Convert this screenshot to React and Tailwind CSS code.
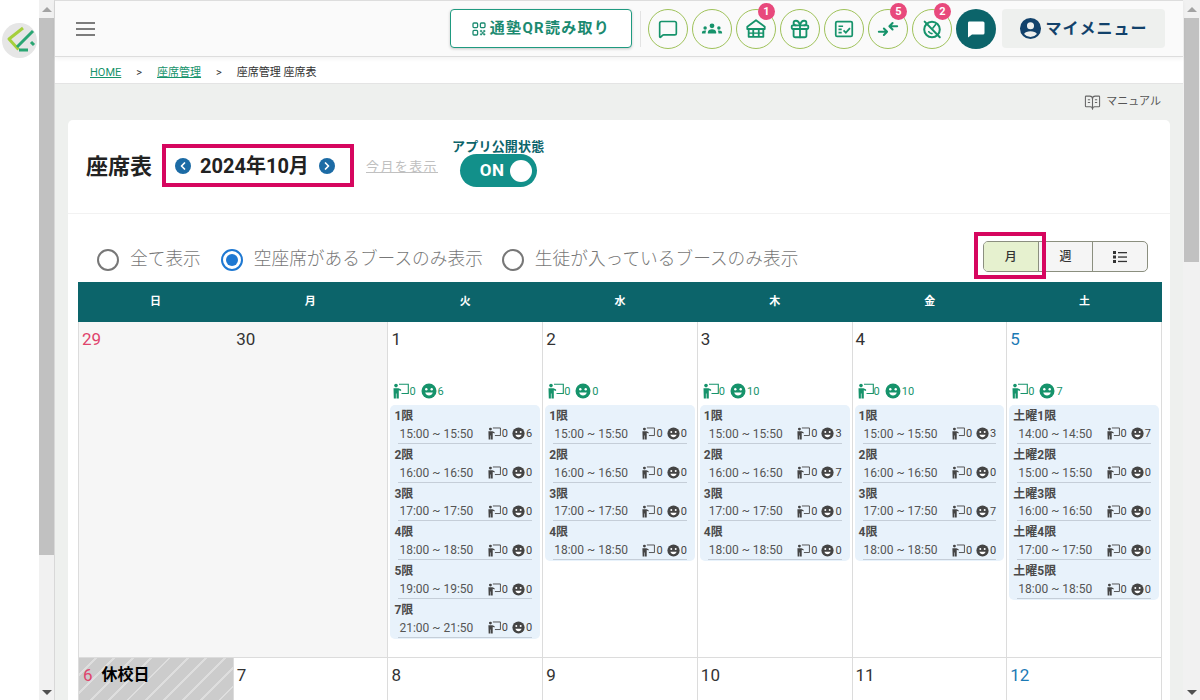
import React from "react";
import { MessageSquare, Gift, ChevronLeft, ChevronRight, BookOpenText } from "lucide-react";

const FONT = "font-['Roboto','Noto_Sans_CJK_JP',sans-serif]";

function Teacher({ className }) {
  return (
    <svg viewBox="0 0 16 16" className={className} fill="none">
      <circle cx="3" cy="2.600" r="1.800" fill="currentColor" />
      <path d="M.5 5.200h5l2.600 1.300v1.400L5.800 7.200V15.500H3.500v-5h-.6v5H.8z" fill="currentColor" />
      <path d="M6 1.200h9.300v9.300H8.500" stroke="currentColor" strokeWidth="1.100" />
    </svg>
  );
}

function Smile({ className }) {
  return (
    <svg viewBox="0 0 16 16" className={className}>
      <circle cx="8" cy="8" r="7.500" fill="currentColor" />
      <circle cx="5.300" cy="6.200" r="1.200" fill="#fff" />
      <circle cx="10.700" cy="6.200" r="1.200" fill="#fff" />
      <path d="M4.200 9.500h7.600c-.5 2-2 3-3.800 3s-3.300-1-3.800-3z" fill="#fff" />
    </svg>
  );
}

function QrIcon({ className }) {
  return (
    <svg viewBox="0 0 14 14" className={className} fill="none" stroke="currentColor" strokeWidth="1.300">
      <rect x="1" y="1" width="4.600" height="4.600" rx="1" />
      <rect x="8.400" y="1" width="4.600" height="4.600" rx="1" />
      <rect x="1" y="8.400" width="4.600" height="4.600" rx="1" />
      <path d="M8.400 8.400h1.400v1.400H8.400zM11.600 8.400H13v1.400h-1.400zM10 10.200h1.400v1.400H10zM8.400 11.800h1.400V13H8.400zM11.600 11.800H13V13h-1.400z" strokeWidth="0.600" fill="currentColor" />
    </svg>
  );
}

function PeopleIcon({ className }) {
  return (
    <svg viewBox="0 0 24 24" className={className} fill="currentColor">
      <circle cx="12" cy="8.500" r="2.600" />
      <path d="M7.500 17v-1.500c0-2 2-3.200 4.500-3.200s4.500 1.200 4.500 3.200V17z" />
      <circle cx="4.500" cy="11" r="1.900" />
      <path d="M1 17v-1c0-1.500 1.300-2.400 3.300-2.400.5 0 1 .1 1.400.2-.5.6-.7 1.300-.7 2V17z" />
      <circle cx="19.500" cy="11" r="1.900" />
      <path d="M23 17v-1c0-1.500-1.300-2.400-3.300-2.400-.5 0-1 .1-1.400.2.5.6.7 1.300.7 2V17z" />
    </svg>
  );
}

function SchoolIcon({ className }) {
  return (
    <svg viewBox="0 0 24 24" className={className} fill="none" stroke="currentColor" strokeWidth="2" strokeLinejoin="round">
      <path d="M12 2.500 2.500 9.500v2.500h19V9.500z" />
      <path d="M4 12v8.500h16V12M9 12v8.500M15 12v8.500" />
      <path d="M4 16.500h16" strokeWidth="1.500" />
    </svg>
  );
}

function ChecklistIcon({ className }) {
  return (
    <svg viewBox="0 0 24 24" className={className} fill="none" stroke="currentColor" strokeWidth="1.900">
      <rect x="3" y="4" width="18" height="16" rx="1.500" />
      <path d="M6 9h5M6 12.500h3.500M6 16h3.500" />
      <path d="m11.500 13.500 2.500 2.500 4.500-5" />
    </svg>
  );
}

function ArrowsIcon({ className }) {
  return (
    <svg viewBox="0 0 24 24" className={className} fill="none" stroke="currentColor" strokeWidth="2.200" strokeLinecap="round" strokeLinejoin="round">
      <path d="M2 15h9M7.500 11.500 11 15l-3.500 3.500" />
      <path d="M22 9h-8M17 5.500 13.500 9l3.500 3.500" />
    </svg>
  );
}

function NoClockIcon({ className }) {
  return (
    <svg viewBox="0 0 24 24" className={className} fill="none" stroke="currentColor" strokeWidth="2.200" strokeLinecap="round">
      <circle cx="12" cy="12.500" r="8.500" />
      <path d="M13 11l3-4M8.500 15c1 1.300 2.300 2 3.500 2" strokeWidth="1.800" />
      <path d="m4 4 16.500 17" />
    </svg>
  );
}

function ListIcon({ className }) {
  return (
    <svg viewBox="0 0 16 14" className={className} fill="currentColor">
      <rect x="1" y="1" width="3" height="3" />
      <rect x="1" y="5.500" width="3" height="3" />
      <rect x="1" y="10" width="3" height="3" />
      <rect x="6" y="2" width="9" height="1.300" />
      <rect x="6" y="6.400" width="9" height="1.300" />
      <rect x="6" y="10.800" width="9" height="1.300" />
    </svg>
  );
}

function CircleBtn({ children, badge }) {
  return (
    <div className="relative flex h-10 w-10 items-center justify-center rounded-full border border-[#9fc25a] bg-[#fafafa] text-[#16936b]">
      {children}
      {badge && (
        <span className="absolute right-0 top-[-7px] flex h-[17px] w-[17px] items-center justify-center rounded-full bg-[#e8497c] text-[11px] font-bold leading-none text-white">
          {badge}
        </span>
      )}
    </div>
  );
}

function Scrollbar({ thumb, className }) {
  return (
    <div className={`flex h-full flex-col items-center bg-[#f1f1f1] ${className}`}>
      <div className="mt-[7px] h-0 w-0 border-x-[5px] border-b-[5px] border-x-transparent border-b-[#a3a3a3]" />
      <div className={`mt-[6px] w-full bg-[#c1c1c1] ${thumb}`} />
      <div className="flex-1" />
      <div className="mb-[5px] h-0 w-0 border-x-[5px] border-t-[5px] border-x-transparent border-t-[#505050]" />
    </div>
  );
}

const times = (start, n) =>
  Array.from({ length: n }, (_, i) => {
    const h = start + i;
    return `${h}:00 ~ ${h}:50`;
  });

const tue = [
  ["1限", "15:00 ~ 15:50", 6],
  ["2限", "16:00 ~ 16:50", 0],
  ["3限", "17:00 ~ 17:50", 0],
  ["4限", "18:00 ~ 18:50", 0],
  ["5限", "19:00 ~ 19:50", 0],
  ["7限", "21:00 ~ 21:50", 0],
];
const four = (vals) => times(15, 4).map((t, i) => [`${i + 1}限`, t, vals[i]]);
const sat = times(14, 5).map((t, i) => [`土曜${i + 1}限`, t, i === 0 ? 7 : 0]);

const week1 = [
  { n: 1, total: 6, rows: tue },
  { n: 2, total: 0, rows: four([0, 0, 0, 0]) },
  { n: 3, total: 10, rows: four([3, 7, 0, 0]) },
  { n: 4, total: 10, rows: four([3, 0, 7, 0]) },
  { n: 5, total: 7, rows: sat, color: "text-[#1c7ab5]" },
];

function DayCell({ d }) {
  return (
    <div className="h-[336px] border-b border-r border-[#dcdcdc] px-[2px]">
      <div className={`pl-[1px] pt-[6px] text-[17px] leading-[22px] ${d.color || "text-[#333]"}`}>{d.n}</div>
      <div className="mt-[29px] flex h-[26px] items-center gap-[5px] pb-[2px] pl-[3px] text-[#16936b]">
        <div className="flex items-center">
          <Teacher className="h-4 w-4" />
          <span className="text-[11px] leading-none">0</span>
        </div>
        <div className="flex items-center gap-[1px]">
          <Smile className="h-4 w-4" />
          <span className="text-[11px] leading-none">{d.total}</span>
        </div>
      </div>
      <div className="rounded-[5px] bg-[#e8f2fb] pb-[1px]">
        {d.rows.map((r, i) => (
          <div key={i} className="h-[38.8px] pl-[4px] pr-[8px]">
            <div className="pt-[2px] text-[12px] font-bold leading-[18px] text-[#4a4a4a]">{r[0]}</div>
            <div className="ml-[4px] flex h-[18.8px] items-center border-b border-[#c5ced8] text-[12px] leading-none text-[#555]">
              <span className="ml-[1px]">{r[1]}</span>
              <span className="ml-auto flex items-center text-[#444]">
                <Teacher className="h-[13px] w-[13px]" />
                <span className="ml-[1px] text-[11px]">0</span>
                <Smile className="ml-[4px] h-[13px] w-[13px]" />
                <span className="ml-[1px] text-[11px]">{r[2]}</span>
              </span>
            </div>
          </div>
        ))}
      </div>
    </div>
  );
}

export default function App() {
  return (
    <div className={`flex h-[700px] w-[1200px] overflow-hidden bg-white ${FONT}`}>
      {/* left rail */}
      <div className="flex w-[39px] shrink-0 justify-start pl-[2px] pt-[23px]">
        <div className="h-[35px] w-[35px] rounded-full bg-[#e6e6e6]">
          <svg viewBox="0 0 35 35" className="h-[35px] w-[35px]" fill="none" strokeWidth="3" strokeLinejoin="round">
            <path d="M21 5 7 16l9.500 10.500" stroke="#a5cf3c" />
            <path d="M15 24 31 8" stroke="#2aa673" />
            <path d="M17 27h9M29 19l3 3" stroke="#2aa673" />
          </svg>
        </div>
      </div>
      <Scrollbar className="w-[16px] shrink-0 border-r border-[#d8d8d8]" thumb="h-[537px]" />
      {/* main */}
      <div className="flex min-w-0 flex-1 flex-col bg-[#eef0ee]">
        <header className="z-10 flex h-[57px] shrink-0 items-center border-b border-t border-[#dddddd] bg-[#fafafa] pr-[18px] shadow-[0_2px_4px_rgba(0,0,0,0.05)]">
          <div className="ml-[21px] flex w-[19px] flex-col gap-[4px]">
            <span className="h-[2px] bg-[#7c7c7c]" />
            <span className="h-[2px] bg-[#7c7c7c]" />
            <span className="h-[2px] bg-[#7c7c7c]" />
          </div>
          <button className="ml-auto flex h-[39px] w-[182px] items-center justify-center gap-[4px] rounded-[4px] border-[1.5px] border-[#1f9a80] bg-white text-[15px] font-bold tracking-[1.3px] text-[#1b8a70] shadow-[0_1px_3px_rgba(0,0,0,0.2)]">
            <QrIcon className="h-[14px] w-[14px]" />
            通塾QR読み取り
          </button>
          <div className="ml-[8px] mr-[7px] h-[36px] w-px bg-[#e3e3e3]" />
          <div className="flex items-center gap-[4px]">
            <CircleBtn><MessageSquare className="h-[20px] w-[20px]" strokeWidth={2} /></CircleBtn>
            <CircleBtn><PeopleIcon className="h-[22px] w-[22px]" /></CircleBtn>
            <CircleBtn badge="1"><SchoolIcon className="h-[22px] w-[22px]" /></CircleBtn>
            <CircleBtn><Gift className="h-[22px] w-[22px]" strokeWidth={2} /></CircleBtn>
            <CircleBtn><ChecklistIcon className="h-[22px] w-[22px]" /></CircleBtn>
            <CircleBtn badge="5"><ArrowsIcon className="h-[22px] w-[22px]" /></CircleBtn>
            <CircleBtn badge="2"><NoClockIcon className="h-[22px] w-[22px]" /></CircleBtn>
            <div className="flex h-10 w-10 items-center justify-center rounded-full bg-[#0c646a]">
              <svg viewBox="0 0 20 20" className="h-[20px] w-[20px]"><path d="M3 2.500h14a1.500 1.500 0 0 1 1.500 1.500v10a1.500 1.500 0 0 1-1.500 1.500H6L2 18.500V4A1.500 1.500 0 0 1 3 2.500z" fill="#fff" /></svg>
            </div>
          </div>
          <div className="ml-[6px] flex h-[39px] w-[163px] items-center justify-center gap-[3px] rounded-[4px] bg-[#eef0ee] text-[16px] font-bold tracking-[1px] text-[#12426b]">
            <svg viewBox="0 0 24 24" className="h-[23px] w-[23px]" fill="#12426b">
              <path d="M12 1a11 11 0 1 0 0 22 11 11 0 0 0 0-22zm0 4.500a3.700 3.700 0 1 1 0 7.400 3.700 3.700 0 0 1 0-7.400zm0 15.300a8.800 8.800 0 0 1-6.700-3.100c.8-1.700 3.700-2.800 6.700-2.800s5.900 1.100 6.700 2.800a8.800 8.800 0 0 1-6.700 3.100z" />
            </svg>
            マイメニュー
          </div>
        </header>

        <nav className="flex h-[27px] shrink-0 items-center border-b border-[#e4e4e4] bg-white pl-[35px] pt-[6px] text-[11px] text-[#333]">
          <span className="text-[#16936b] underline">HOME</span>
          <span className="ml-[15px]">&gt;</span>
          <span className="ml-[15px] text-[#16936b] underline">座席管理</span>
          <span className="ml-[15px]">&gt;</span>
          <span className="ml-[15px]">座席管理 座席表</span>
        </nav>

        <div className="flex h-[36px] shrink-0 items-center justify-end pr-[22px] pt-[1px] text-[11px] text-[#555]">
          <BookOpenText className="mr-[5px] h-[17px] w-[17px] text-[#666]" strokeWidth={1.500} />
          マニュアル
        </div>

        <section className="relative ml-[13px] mr-[13px] flex-1 rounded-t-[5px] bg-white">
          <div className="flex h-[94px] items-start border-b border-[#f2f2f2] pl-[18px]">
            <h1 className="mt-[32px] text-[22px] font-bold leading-[30px] text-[#222]">座席表</h1>
            <div className="ml-[10px] mt-[24px] flex h-[43px] w-[192px] shrink-0 items-center border-[4px] border-[#d6065f] pl-[9px]">
              <span className="flex h-4 w-4 items-center justify-center rounded-full bg-[#1c6ba5] text-white"><ChevronLeft className="h-3 w-3" strokeWidth={3.500} /></span>
              <span className="ml-[9px] text-[20px] font-bold leading-none text-[#222]">2024年10月</span>
              <span className="ml-[10px] flex h-4 w-4 items-center justify-center rounded-full bg-[#1c6ba5] text-white"><ChevronRight className="h-3 w-3" strokeWidth={3.500} /></span>
            </div>
            <span className="ml-[12px] mt-[37px] text-[13px] leading-[20px] tracking-[1.4px] text-[#c0c0c0] underline">今月を表示</span>
            <div className="relative ml-[14px] mt-[19px] flex flex-col items-center">
              <span className="text-[13px] font-bold leading-[15px] tracking-[0.2px] text-[#0c646a]">アプリ公開状態</span>
              <div className="flex h-[33px] w-[77px] items-center justify-between rounded-full bg-[#12908a] pl-[20px] pr-[5px] text-[17px] font-bold tracking-[0.5px] text-white">
                ON
                <span className="h-[22px] w-[22px] rounded-full bg-white" />
              </div>
            </div>
          </div>

          <div className="flex h-[68px] items-end pb-[11px] pl-[29px] text-[17.7px] font-light leading-[24px] text-[#777]">
            <span className="h-[22px] w-[22px] rounded-full border-2 border-[#777]" />
            <span className="ml-[11px]">全て表示</span>
            <span className="ml-[20px] flex h-[22px] w-[22px] items-center justify-center rounded-full border-2 border-[#1e78d2]">
              <span className="h-[12px] w-[12px] rounded-full bg-[#1e78d2]" />
            </span>
            <span className="ml-[11px]">空座席があるブースのみ表示</span>
            <span className="ml-[19px] h-[22px] w-[22px] rounded-full border-2 border-[#777]" />
            <span className="ml-[11px]">生徒が入っているブースのみ表示</span>
          </div>

          <div className="absolute left-[915px] top-[121px] flex h-[31px] w-[165px] overflow-hidden rounded-[5px] border border-[#8b8f7f] bg-[#f5f5f5] text-[12px] font-medium text-[#333]">
            <span className="flex flex-1 items-center justify-center border-r border-[#8b8f7f] bg-[#e6f1cf]">月</span>
            <span className="flex flex-1 items-center justify-center border-r border-[#8b8f7f]">週</span>
            <span className="flex flex-1 items-center justify-center"><ListIcon className="h-[14px] w-[16px]" /></span>
          </div>
          <div className="absolute left-[906px] top-[112px] h-[47px] w-[72px] border-[4px] border-[#d6065f]" />

          <div className="ml-[10px] mr-[8px]">
            <div className="grid h-[40px] grid-cols-7 bg-[#0c646a] text-[11px] font-bold text-white">
              {["日", "月", "火", "水", "木", "金", "土"].map((d) => (
                <div key={d} className="flex items-center justify-center">{d}</div>
              ))}
            </div>
            <div className="grid grid-cols-7 border-l border-[#dcdcdc]">
              <div className="col-span-2 grid h-[336px] grid-cols-2 border-b border-r border-[#dcdcdc] bg-[#f6f6f6] text-[17px] leading-[22px]">
                <div className="pl-[3px] pt-[6px] text-[#e0446c]">29</div>
                <div className="pl-[3px] pt-[6px] text-[#333]">30</div>
              </div>
              {week1.map((d) => <DayCell key={d.n} d={d} />)}

              <div className="flex h-[60px] items-start gap-[9px] border-r border-[#dcdcdc] bg-[repeating-linear-gradient(135deg,#cccccc_0px,#cccccc_11px,#dedede_11px,#dedede_13px)] pl-[4px] pt-[6px] text-[17px] leading-[22px]">
                <span className="text-[#e0446c]">6</span>
                <span className="text-[16px] font-bold text-black">休校日</span>
              </div>
              {[7, 8, 9, 10, 11, 12].map((n) => (
                <div key={n} className={`h-[60px] border-r border-[#dcdcdc] pl-[3px] pt-[6px] text-[17px] leading-[22px] ${n === 12 ? "text-[#1c7ab5]" : "text-[#333]"}`}>{n}</div>
              ))}
            </div>
          </div>
        </section>
      </div>
      <Scrollbar className="w-[17px] shrink-0 px-[1px]" thumb="h-[244px]" />
    </div>
  );
}
